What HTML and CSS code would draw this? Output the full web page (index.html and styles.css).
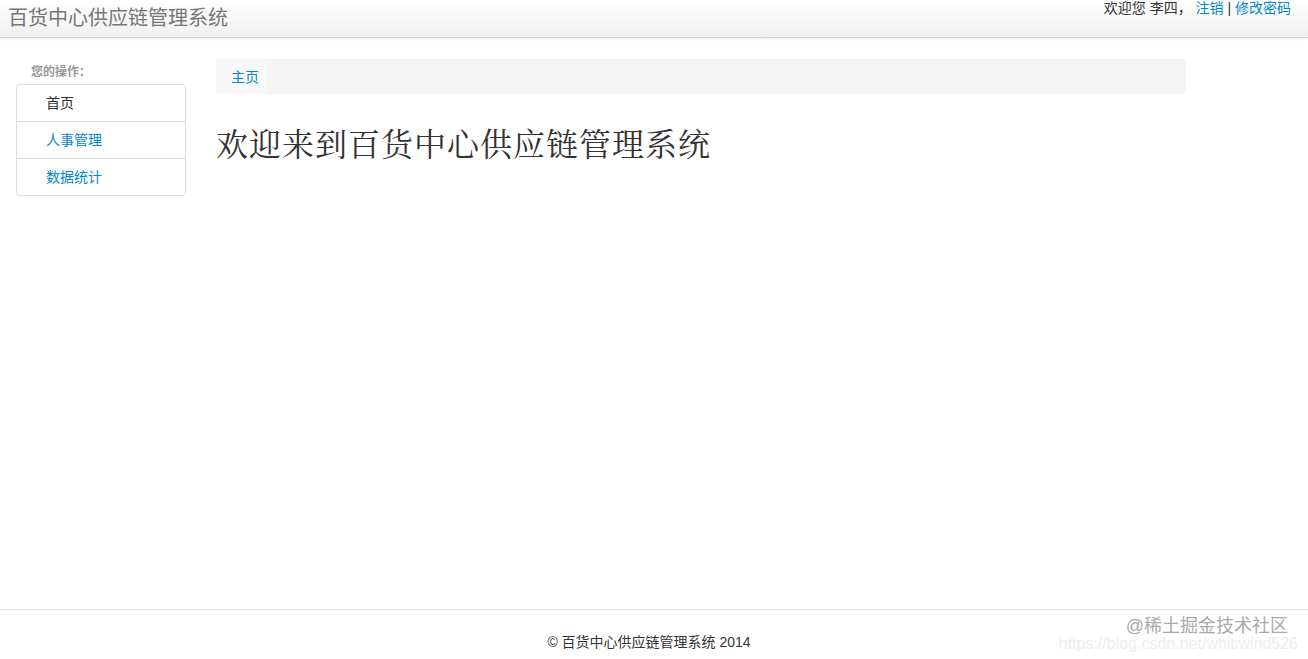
FILE: index.html
```html
<!DOCTYPE html>
<html lang="zh-CN">
  <head>
    <meta charset="UTF-8" />
    <meta name="viewport" content="width=device-width, initial-scale=1.0" />
    <title>百货中心供应链管理系统</title>
    <link rel="stylesheet" href="styles.css">
  </head>
  <body>
    <div class="navbar">
      <a class="brand" href="#">百货中心供应链管理系统</a>
      <div class="user">
        欢迎您 李四， <a href="#">注销</a> | <a href="#">修改密码</a>
      </div>
    </div>
    <div class="page">
      <div class="sidebar">
        <div class="nav-header">您的操作：</div>
        <ul class="nav-list">
          <li class="active"><a href="#">首页</a></li>
          <li><a href="#">人事管理</a></li>
          <li><a href="#">数据统计</a></li>
        </ul>
      </div>
      <div class="main">
        <ul class="breadcrumb">
          <li><a href="#">主页</a></li>
        </ul>
        <h1>欢迎来到百货中心供应链管理系统</h1>
      </div>
    </div>
    <div class="footer">
      <p>© 百货中心供应链管理系统 2014</p>
      <div class="mark">
        <span class="mark-site">@稀土掘金技术社区</span>
        <span class="mark-url">https://blog.csdn.net/whitiwind526</span>
      </div>
    </div>
  </body>
</html>
```

FILE: styles.css
```css
html, body {
  height: 100%;
}
body {
  margin: 0;
  font-family: "Liberation Sans", "Noto Sans CJK SC", sans-serif;
  font-size: 14px;
  line-height: 20px;
  color: #333;
  background: #fff;
  display: flex;
  flex-direction: column;
}
a {
  color: #0088cc;
  text-decoration: none;
}
.navbar {
  height: 37px;
  display: flex;
  justify-content: space-between;
  background: linear-gradient(to bottom, #ffffff, #f0f0f0);
  border-bottom: 1px solid #d4d4d4;
  box-shadow: 0 1px 3px rgba(0, 0, 0, 0.08);
}
.brand {
  color: #777;
  font-size: 20px;
  line-height: 20px;
  padding: 8px 0 0 8px;
}
.user {
  padding: 0 17px 0 0;
  line-height: 16px;
  color: #333;
}
.page {
  flex: 1;
  display: flex;
  gap: 30px;
  padding: 24px 0 0 16px;
}
.sidebar {
  width: 170px;
}
.nav-header {
  font-size: 12px;
  font-weight: bold;
  color: #999;
  line-height: 20px;
  padding: 0 0 2px 15px;
}
.nav-list {
  list-style: none;
  margin: 0;
  padding: 0;
  border: 1px solid #ddd;
  border-radius: 4px;
}
.nav-list li + li {
  border-top: 1px solid #ddd;
}
.nav-list a {
  display: block;
  padding: 8px 29px;
  line-height: 20px;
}
.nav-list .active a {
  color: #333;
}
.main {
  width: 970px;
}
.breadcrumb {
  list-style: none;
  margin: 0;
  padding: 0;
  height: 35px;
  margin-top: -3px;
  background: #f5f5f5;
  border-radius: 4px;
  display: flex;
}
.breadcrumb li a {
  display: block;
  padding: 8px 7px 7px 15px;
  background: #f8f8f8;
  border-radius: 4px 0 0 4px;
}
h1 {
  margin: 30px 0 0;
  font-family: "Noto Serif CJK SC", "Liberation Serif", "Noto Sans CJK SC", serif;
  font-weight: normal;
  font-size: 32px;
  line-height: 36px;
  letter-spacing: 1px;
  color: #333;
}
.footer {
  position: relative;
  height: 49px;
  border-top: 1px solid #e5e5e5;
  text-align: center;
}
.footer p {
  margin: 22px 0 0;
  line-height: 20px;
  font-size: 14px;
  padding-right: 10px;
}
.mark {
  position: absolute;
  right: 10px;
  top: 6px;
  text-align: right;
}
.mark-site {
  position: absolute;
  right: 10px;
  top: 0;
  font-size: 18px;
  color: #aaa;
  white-space: nowrap;
}
.mark-url {
  display: block;
  padding-top: 18px;
  font-size: 16px;
  color: #eee;
  white-space: nowrap;
}
```
